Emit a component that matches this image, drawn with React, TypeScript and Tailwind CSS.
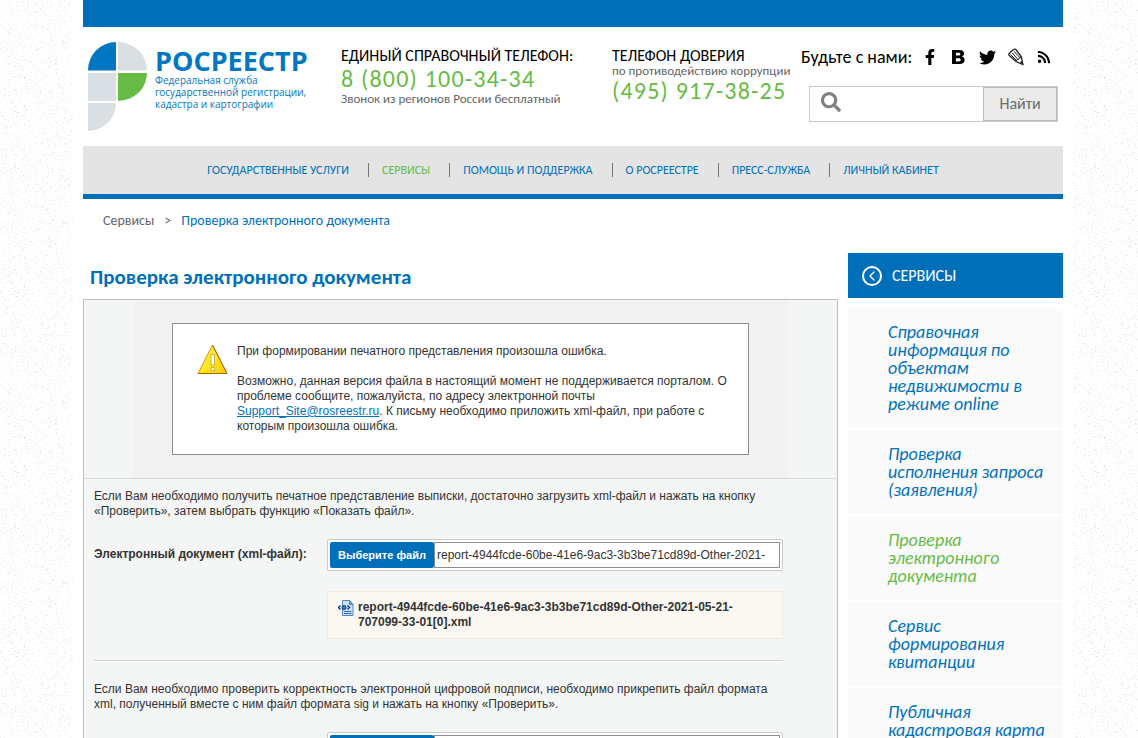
import type { ReactNode } from "react";
import { FaFacebookF, FaTwitter, FaSearch, FaRss } from "react-icons/fa";
import { LuChevronLeft } from "react-icons/lu";

const navItems = [
  "ГОСУДАРСТВЕННЫЕ УСЛУГИ",
  "СЕРВИСЫ",
  "ПОМОЩЬ И ПОДДЕРЖКА",
  "О РОСРЕЕСТРЕ",
  "ПРЕСС-СЛУЖБА",
  "ЛИЧНЫЙ КАБИНЕТ",
];

const services = [
  "Справочная информация по объектам недвижимости в режиме online",
  "Проверка исполнения запроса (заявления)",
  "Проверка электронного документа",
  "Сервис формирования квитанции",
  "Публичная кадастровая карта",
];

const TILE = 180;

// Paper grain: a fixed pseudo-random set of pixels, repeated as a tile
function grain(seed: number, count: number) {
  let state = seed;
  let d = "";
  for (let i = 0; i < count; i++) {
    state = (state * 1103515245 + 12345) % 2147483648;
    const x = Math.floor((state / 2147483648) * TILE);
    state = (state * 1103515245 + 12345) % 2147483648;
    const y = Math.floor((state / 2147483648) * TILE);
    d += `M${x} ${y}h1v1h-1z`;
  }
  return d;
}

const lightGrain = grain(17, 2400);
const midGrain = grain(91, 900);
const darkGrain = grain(333, 220);

function Grain() {
  return (
    <svg className="absolute inset-0 -z-10 h-full w-full" aria-hidden="true" shapeRendering="crispEdges">
      <pattern id="grain" width={TILE} height={TILE} patternUnits="userSpaceOnUse">
        <path d={lightGrain} fill="#f4f4f4" />
        <path d={midGrain} fill="#ebebeb" />
        <path d={darkGrain} fill="#dedede" />
      </pattern>
      <rect width="100%" height="100%" fill="url(#grain)" />
    </svg>
  );
}

function LogoMark() {
  return (
    <svg width="59" height="89" viewBox="0 0 59 89" aria-hidden="true" className="shrink-0">
      <path d="M28 0v28.500H0A28 28.500 0 0 1 28 0z" fill="#0077c0" />
      <path d="M30 0a29 28.500 0 0 1 29 28.500H30z" fill="#d9dfe2" />
      <path d="M0 31h28v28H0z" fill="#d9dfe2" />
      <path d="M30 31h29a29 28 0 0 1-29 28z" fill="#67bc46" />
      <path d="M0 61h28A28 28 0 0 1 0 89z" fill="#d9dfe2" />
    </svg>
  );
}

function VkIcon() {
  return (
    <svg width="13" height="14" viewBox="0 0 13 14" aria-hidden="true">
      <path
        fillRule="evenodd"
        d="M0 0h7.500C10.500 0 12 1.300 12 3.500 12 5 11.200 6 9.800 6.500 11.700 6.900 12.600 8.200 12.600 9.900 12.600 12.500 10.700 14 7.500 14H0V0zM4 2.700v2.900h2.300c1.300 0 2-.5 2-1.500s-.7-1.400-2-1.400zM4 8.200v3.200h2.700c1.300 0 2-.6 2-1.600s-.7-1.600-2-1.600z"
      />
    </svg>
  );
}

function PencilIcon() {
  return (
    <svg width="16" height="18" viewBox="0 0 16 18" fill="none" stroke="#222" aria-hidden="true">
      <path d="M1 5.500 5.500 1.500C6.500.8 7.500 1 8.300 2l5.200 7 1.300 7.500L8 13.500 1.300 7.500C.8 6.800.6 6 1 5.500z" strokeWidth="1.300" />
      <path d="M2.500 6.500 9 13M4.300 5l6.200 7.200M6 3.300l6.500 7M7.500 13l5.800-4" />
      <path d="m12.500 14 2.300 2.500-.4-3z" fill="#222" />
    </svg>
  );
}

function WarningIcon() {
  return (
    <svg width="31" height="31" viewBox="0 0 31 31" aria-hidden="true" className="shrink-0">
      <defs>
        <linearGradient id="warn" x1="0" y1="0" x2="1" y2="1">
          <stop offset="0" stopColor="#ffe95a" />
          <stop offset="0.500" stopColor="#ffe81f" />
          <stop offset="1" stopColor="#fcc800" />
        </linearGradient>
      </defs>
      <path d="M15.500 1 30 29.500H1z" fill="url(#warn)" stroke="#d9902a" strokeLinejoin="round" />
      <path d="M15.500 1 30 29.500H1" fill="none" stroke="#a8640c" strokeLinejoin="round" />
      <path d="M14 10.500h3.500v10.500H14zM14 23.500h3.500v3H14z" fill="#fff" stroke="#b9a046" strokeWidth="0.800" />
    </svg>
  );
}

function XmlFileIcon() {
  return (
    <svg width="16" height="16" viewBox="0 0 16 16" aria-hidden="true" className="shrink-0">
      <path d="M4.500.5h7l3.500 4v11H4.500z" fill="#cfe3f8" stroke="#4f86c6" />
      <path d="M11.500.5v4H15z" fill="#6ea3dc" stroke="#4f86c6" />
      <path d="M6 11.500h7.500M6 13.500h7.500" stroke="#2f6db5" />
      <path d="M2.500 5.500.5 7.500l2 2M9.500 5.500l2 2-2 2" fill="none" stroke="#13258f" strokeWidth="1.300" />
      <circle cx="6" cy="7.500" r="2" fill="#25a08a" stroke="#13258f" />
    </svg>
  );
}

function SocialLink({ label, children }: { label: string; children: ReactNode }) {
  return (
    <a href="#" aria-label={label} className="flex h-5 w-[29px] items-center justify-center text-black">
      {children}
    </a>
  );
}

function Header() {
  return (
    <header className="grid h-[119px] grid-cols-[253px_271px_189px_minmax(0,1fr)] px-[5px]">
      <a href="#" className="mt-[15px] flex items-start gap-2 self-start text-[#0077c0]">
        <LogoMark />
        <span className="block pt-[5px] font-['Open_Sans',sans-serif]">
          <span className="block text-[27px] leading-[27px] font-bold">РОСРЕЕСТР</span>
          <span className="block text-[10px] leading-3 font-medium whitespace-nowrap">
            Федеральная служба
            <br />
            государственной регистрации,
            <br />
            кадастра и картографии
          </span>
        </span>
      </a>

      <div className="pt-5 text-[13px] text-[#666]">
        <p className="text-base leading-[18px] text-black">ЕДИНЫЙ СПРАВОЧНЫЙ ТЕЛЕФОН:</p>
        <p className="text-2xl leading-[28px] tracking-wider text-[#67bc46]">8 (800) 100-34-34</p>
        <p className="leading-3">Звонок из регионов России бесплатный</p>
      </div>

      <div className="pt-5 text-[13px] text-[#666]">
        <p className="text-base leading-[18px] text-black">ТЕЛЕФОН ДОВЕРИЯ</p>
        <p className="leading-3 whitespace-nowrap">по противодействию коррупции</p>
        <p className="text-2xl leading-[28px] tracking-wider text-[#67bc46]">(495) 917-38-25</p>
      </div>

      <div className="pt-5">
        <div className="flex items-center">
          <span className="mr-1 text-lg leading-5 whitespace-nowrap text-black">Будьте с нами:</span>
          <SocialLink label="Facebook">
            <FaFacebookF size={16} />
          </SocialLink>
          <SocialLink label="ВКонтакте">
            <VkIcon />
          </SocialLink>
          <SocialLink label="Twitter">
            <FaTwitter size={17} />
          </SocialLink>
          <SocialLink label="Живой журнал">
            <PencilIcon />
          </SocialLink>
          <SocialLink label="RSS">
            <FaRss size={14} />
          </SocialLink>
        </div>
        <form className="mt-[19px] ml-2 flex h-9 border border-[#c9c9c9] bg-white">
          <label htmlFor="search" className="flex w-[42px] shrink-0 items-center justify-center pb-1 text-[#808080]">
            <FaSearch size={20} aria-label="Поиск" />
          </label>
          <input id="search" type="text" className="min-w-0 flex-1 text-base outline-none" />
          <button
            type="button"
            className="w-[74px] shrink-0 border border-[#bbb] bg-[#ebebeb] text-base text-[#6b6b6b]"
          >
            Найти
          </button>
        </form>
      </div>
    </header>
  );
}

function FileField({ id, value }: { id: string; value: string }) {
  return (
    <div className="flex h-8 rounded-xs border border-[#c9c9c9] bg-white p-0.5">
      <button type="button" className="w-[104px] shrink-0 rounded-xs bg-[#006fba] text-[11px] font-bold text-white">
        Выберите файл
      </button>
      <input
        id={id}
        type="text"
        readOnly
        value={value}
        className="min-w-0 flex-1 border border-[#8c8e96] bg-white px-0.5 text-xs outline-none"
      />
    </div>
  );
}

export default function App() {
  return (
    <div className="relative isolate min-h-screen bg-[#fefefe] pl-2 font-['Carlito','Open_Sans',sans-serif]">
      <Grain />
      <div className="mx-auto min-h-screen max-w-[1000px] bg-white px-2.5">
        <div className="h-[27px] bg-[#006fba]" />
        <Header />

        <nav className="flex h-[53px] items-center justify-center border-b-5 border-[#006fba] bg-[#e4e4e4] text-xs">
          {navItems.map((item, index) => (
            <div key={item} className="flex items-center">
              {index > 0 && <span className="mr-[13px] ml-[19px] h-3.5 w-px bg-[#777]" />}
              <a href="#" className={item === "СЕРВИСЫ" ? "text-[#67bc46]" : "text-[#0072bc]"}>
                {item}
              </a>
            </div>
          ))}
        </nav>

        <div className="flex gap-2.5 pt-3 pl-5 text-sm leading-5 text-[#666]">
          <a href="#">Сервисы</a>
          <span>&gt;</span>
          <a href="#" className="text-[#0072bc]">
            Проверка электронного документа
          </a>
        </div>

        <div className="mt-[22px] flex gap-2.5">
          <main className="min-w-0 flex-1">
            <h1 className="flex h-[46px] items-center pt-1 pl-[7px] text-[21px] font-bold text-[#006fba]">
              Проверка электронного документа
            </h1>

            <div className="border border-b-0 border-[#bfbfbf] bg-[#f3f6f5] font-['Liberation_Sans',Arial,sans-serif] text-xs leading-[15px] text-[#333]">
              <div className="border-b border-[#d8dada] px-[50px]">
                <div className="bg-[#f2f2f2] px-[38px] py-[23px]">
                  <div className="flex gap-[9px] border border-[#8c8e96] bg-white py-5 pr-5 pl-6">
                    <WarningIcon />
                    <div>
                      <p>При формировании печатного представления произошла ошибка.</p>
                      <p className="mt-[15px]">
                        Возможно, данная версия файла в настоящий момент не поддерживается порталом. О проблеме сообщите,
                        пожалуйста, по адресу электронной почты{" "}
                        <a href="mailto:Support_Site@rosreestr.ru" className="text-[#0072bc] underline">
                          Support_Site@rosreestr.ru
                        </a>
                        . К письму необходимо приложить xml-файл, при работе с которым произошла ошибка.
                      </p>
                    </div>
                  </div>
                </div>
              </div>

              <div className="pt-2.5 pr-[54px] pl-2.5">
                <p>
                  Если Вам необходимо получить печатное представление выписки, достаточно загрузить xml-файл и нажать на
                  кнопку «Проверить», затем выбрать функцию «Показать файл».
                </p>

                <div className="mt-5 grid grid-cols-[233px_1fr]">
                  <label htmlFor="xml-file" className="pt-2 font-bold">
                    Электронный документ (xml-файл):
                  </label>
                  <div>
                    <FileField id="xml-file" value="report-4944fcde-60be-41e6-9ac3-3b3be71cd89d-Other-2021-" />
                    <div className="mt-5 flex gap-1 border border-[#f3e9de] bg-[#fbf8f4] px-2.5 pt-2 pb-2 font-bold">
                      <XmlFileIcon />
                      <p className="w-[390px]">
                        report-4944fcde-60be-41e6-9ac3-3b3be71cd89d-Other-2021-05-21-707099-33-01[0].xml
                      </p>
                    </div>
                  </div>
                </div>

                <hr className="mt-[21px] mb-5 h-0.5 border-t border-[#d0d2d2] bg-white" />

                <p>
                  Если Вам необходимо проверить корректность электронной цифровой подписи, необходимо прикрепить файл
                  формата xml, полученный вместе с ним файл формата sig и нажать на кнопку «Проверить».
                </p>

                <div className="mt-5 grid grid-cols-[233px_1fr]">
                  <span />
                  <FileField id="sig-file" value="" />
                </div>
              </div>
            </div>
          </main>

          <aside className="w-[215px] shrink-0">
            <h2 className="flex h-[45px] items-center gap-2.5 bg-[#006fba] pl-3.5 text-base text-white">
              <span className="flex size-5 items-center justify-center rounded-full border-2 border-white">
                <LuChevronLeft size={16} />
              </span>
              СЕРВИСЫ
            </h2>
            <ul className="mt-2.5 flex flex-col gap-0.5 text-lg leading-[18px] italic">
              {services.map((service, index) => (
                <li key={service} className="bg-[#fafafa] py-[15px] pr-4 pl-10">
                  <a href="#" className={index === 2 ? "text-[#67bc46]" : "text-[#0072bc]"}>
                    {service}
                  </a>
                </li>
              ))}
            </ul>
          </aside>
        </div>
      </div>
    </div>
  );
}
